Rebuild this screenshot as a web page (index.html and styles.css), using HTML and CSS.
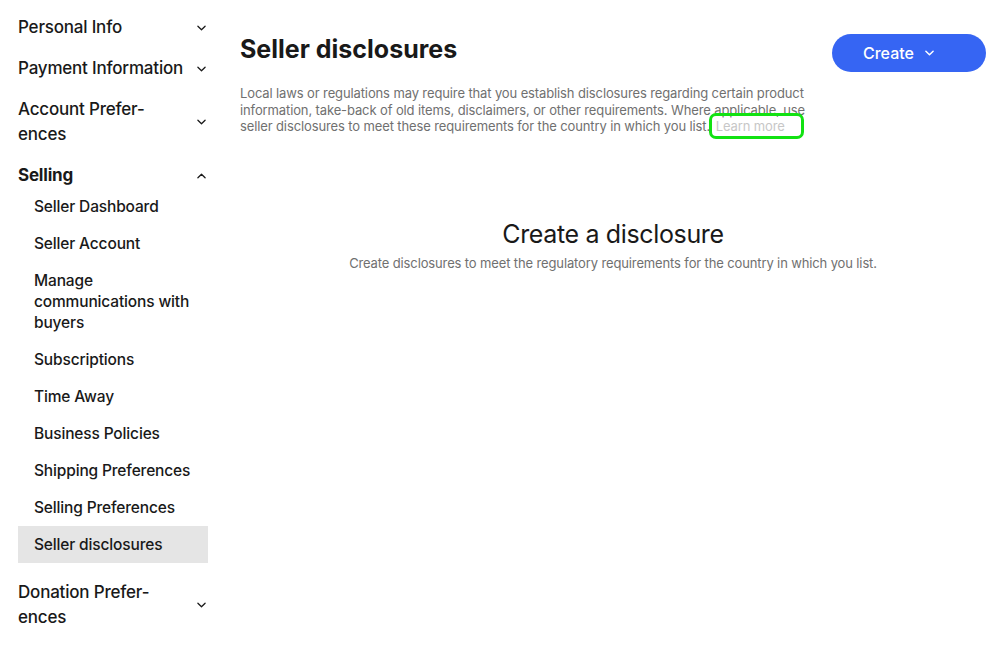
FILE: index.html
```html
<!DOCTYPE html>
<html lang="en">
<head>
    <meta charset="UTF-8">
    <meta name="viewport" content="width=device-width, initial-scale=1.0">
    <title>Seller disclosures</title>
    <link rel="stylesheet" href="styles.css">
</head>
<body>
    <div class="layout">
        <nav class="sidebar">
            <div class="nav-group">
                <a class="nav-head" href="#">
                    <span>Personal Info</span>
                    <svg class="chev" viewBox="0 0 10 6"><path d="M1 1L5 5L9 1"/></svg>
                </a>
            </div>
            <div class="nav-group">
                <a class="nav-head" href="#">
                    <span>Payment Information</span>
                    <svg class="chev" viewBox="0 0 10 6"><path d="M1 1L5 5L9 1"/></svg>
                </a>
            </div>
            <div class="nav-group">
                <a class="nav-head" href="#">
                    <span class="wrap">Account Prefer&shy;ences</span>
                    <svg class="chev" viewBox="0 0 10 6"><path d="M1 1L5 5L9 1"/></svg>
                </a>
            </div>
            <div class="nav-group open">
                <a class="nav-head" href="#">
                    <span>Selling</span>
                    <svg class="chev" viewBox="0 0 10 6"><path d="M1 5L5 1L9 5"/></svg>
                </a>
                <ul class="sub-list">
                    <li><a href="#">Seller Dashboard</a></li>
                    <li><a href="#">Seller Account</a></li>
                    <li><a href="#">Manage communications with buyers</a></li>
                    <li><a href="#">Subscriptions</a></li>
                    <li><a href="#">Time Away</a></li>
                    <li><a href="#">Business Policies</a></li>
                    <li><a href="#">Shipping Preferences</a></li>
                    <li><a href="#">Selling Preferences</a></li>
                    <li><a class="active" href="#">Seller disclosures</a></li>
                </ul>
            </div>
            <div class="nav-group">
                <a class="nav-head" href="#">
                    <span class="wrap">Donation Prefer&shy;ences</span>
                    <svg class="chev" viewBox="0 0 10 6"><path d="M1 1L5 5L9 1"/></svg>
                </a>
            </div>
        </nav>

        <main class="content">
            <div class="page-head">
                <div class="page-intro">
                    <h1>Seller disclosures</h1>
                    <p class="lead">Local laws or regulations may require that you establish disclosures regarding certain product information, take-back of old items, disclaimers, or other requirements. Where applicable, use seller disclosures to meet these requirements for the country in which you list. <a class="learn" href="#">Learn more</a></p>
                </div>
                <button class="btn-create">
                    Create
                    <svg class="chev" viewBox="0 0 10 6"><path d="M1 1L5 5L9 1"/></svg>
                </button>
            </div>

            <section class="empty">
                <h2>Create a disclosure</h2>
                <p>Create disclosures to meet the regulatory requirements for the country in which you list.</p>
            </section>
        </main>
    </div>
</body>
</html>
```

FILE: styles.css
```css
:root {
    --text: #191919;
    --muted: #707070;
    --blue: #3665f3;
    --active-bg: #e5e5e5;
}

body, html {
    margin: 0;
    padding: 0;
    background: #fff;
    color: var(--text);
    font-family: Inter, "Liberation Sans", sans-serif;
}

a {
    color: inherit;
    text-decoration: none;
}

.layout {
    display: flex;
    gap: 32px;
    padding: 7px 13px 0 18px;
}

/* left navigation */
.sidebar {
    width: 190px;
    flex-shrink: 0;
}

.nav-head {
    display: flex;
    align-items: center;
    justify-content: space-between;
    padding: 8px 0;
    font-size: 17px;
    line-height: 25px;
    font-weight: 500;
    letter-spacing: -0.2px;
}

.nav-head .wrap {
    width: 140px;
    hyphens: manual;
}

.chev {
    width: 9px;
    height: 6px;
    margin-right: 2px;
    fill: none;
    stroke: currentColor;
    stroke-width: 1.4;
    stroke-linecap: round;
    stroke-linejoin: round;
}

.open .nav-head {
    font-weight: 700;
    padding-bottom: 0;
}

.sub-list {
    list-style: none;
    margin: 0 0 9px;
    padding: 0;
}

.sub-list a {
    display: block;
    padding: 8px 8px 8px 16px;
    font-size: 15.5px;
    line-height: 21px;
    font-weight: 500;
    letter-spacing: -0.15px;
}

.sub-list a.active {
    background: var(--active-bg);
}

/* main area */
.content {
    flex: 1;
    min-width: 0;
}

.page-head {
    display: flex;
    justify-content: space-between;
    align-items: flex-start;
}

.page-intro {
    width: 572px;
}

h1 {
    margin: 27px 0 0;
    font-size: 25px;
    line-height: 30px;
    font-weight: 700;
}

.lead {
    margin: 21px 0 0;
    font-size: 13px;
    line-height: 16.5px;
    letter-spacing: -0.12px;
    color: var(--muted);
}

.learn {
    color: #c7c7c7;
    padding: 2px 16px 2px 4px;
    margin-left: -2px;
    border-radius: 4px;
    outline: 3px solid #12e212;
}

.btn-create {
    margin-top: 27px;
    width: 154px;
    height: 38px;
    padding: 0 0 0 31px;
    border: none;
    border-radius: 19px;
    background: var(--blue);
    color: #fff;
    font-family: inherit;
    font-size: 16px;
    font-weight: 500;
    display: flex;
    align-items: center;
    gap: 11px;
    cursor: pointer;
}

.btn-create .chev {
    stroke-width: 1.6;
}

.empty {
    margin-top: 84px;
    text-align: center;
}

.empty h2 {
    margin: 0;
    font-size: 25px;
    line-height: 30px;
    font-weight: 400;
    letter-spacing: -0.35px;
}

.empty p {
    margin: 5px 0 0;
    font-size: 13px;
    line-height: 18px;
    letter-spacing: -0.13px;
    color: var(--muted);
}
```
